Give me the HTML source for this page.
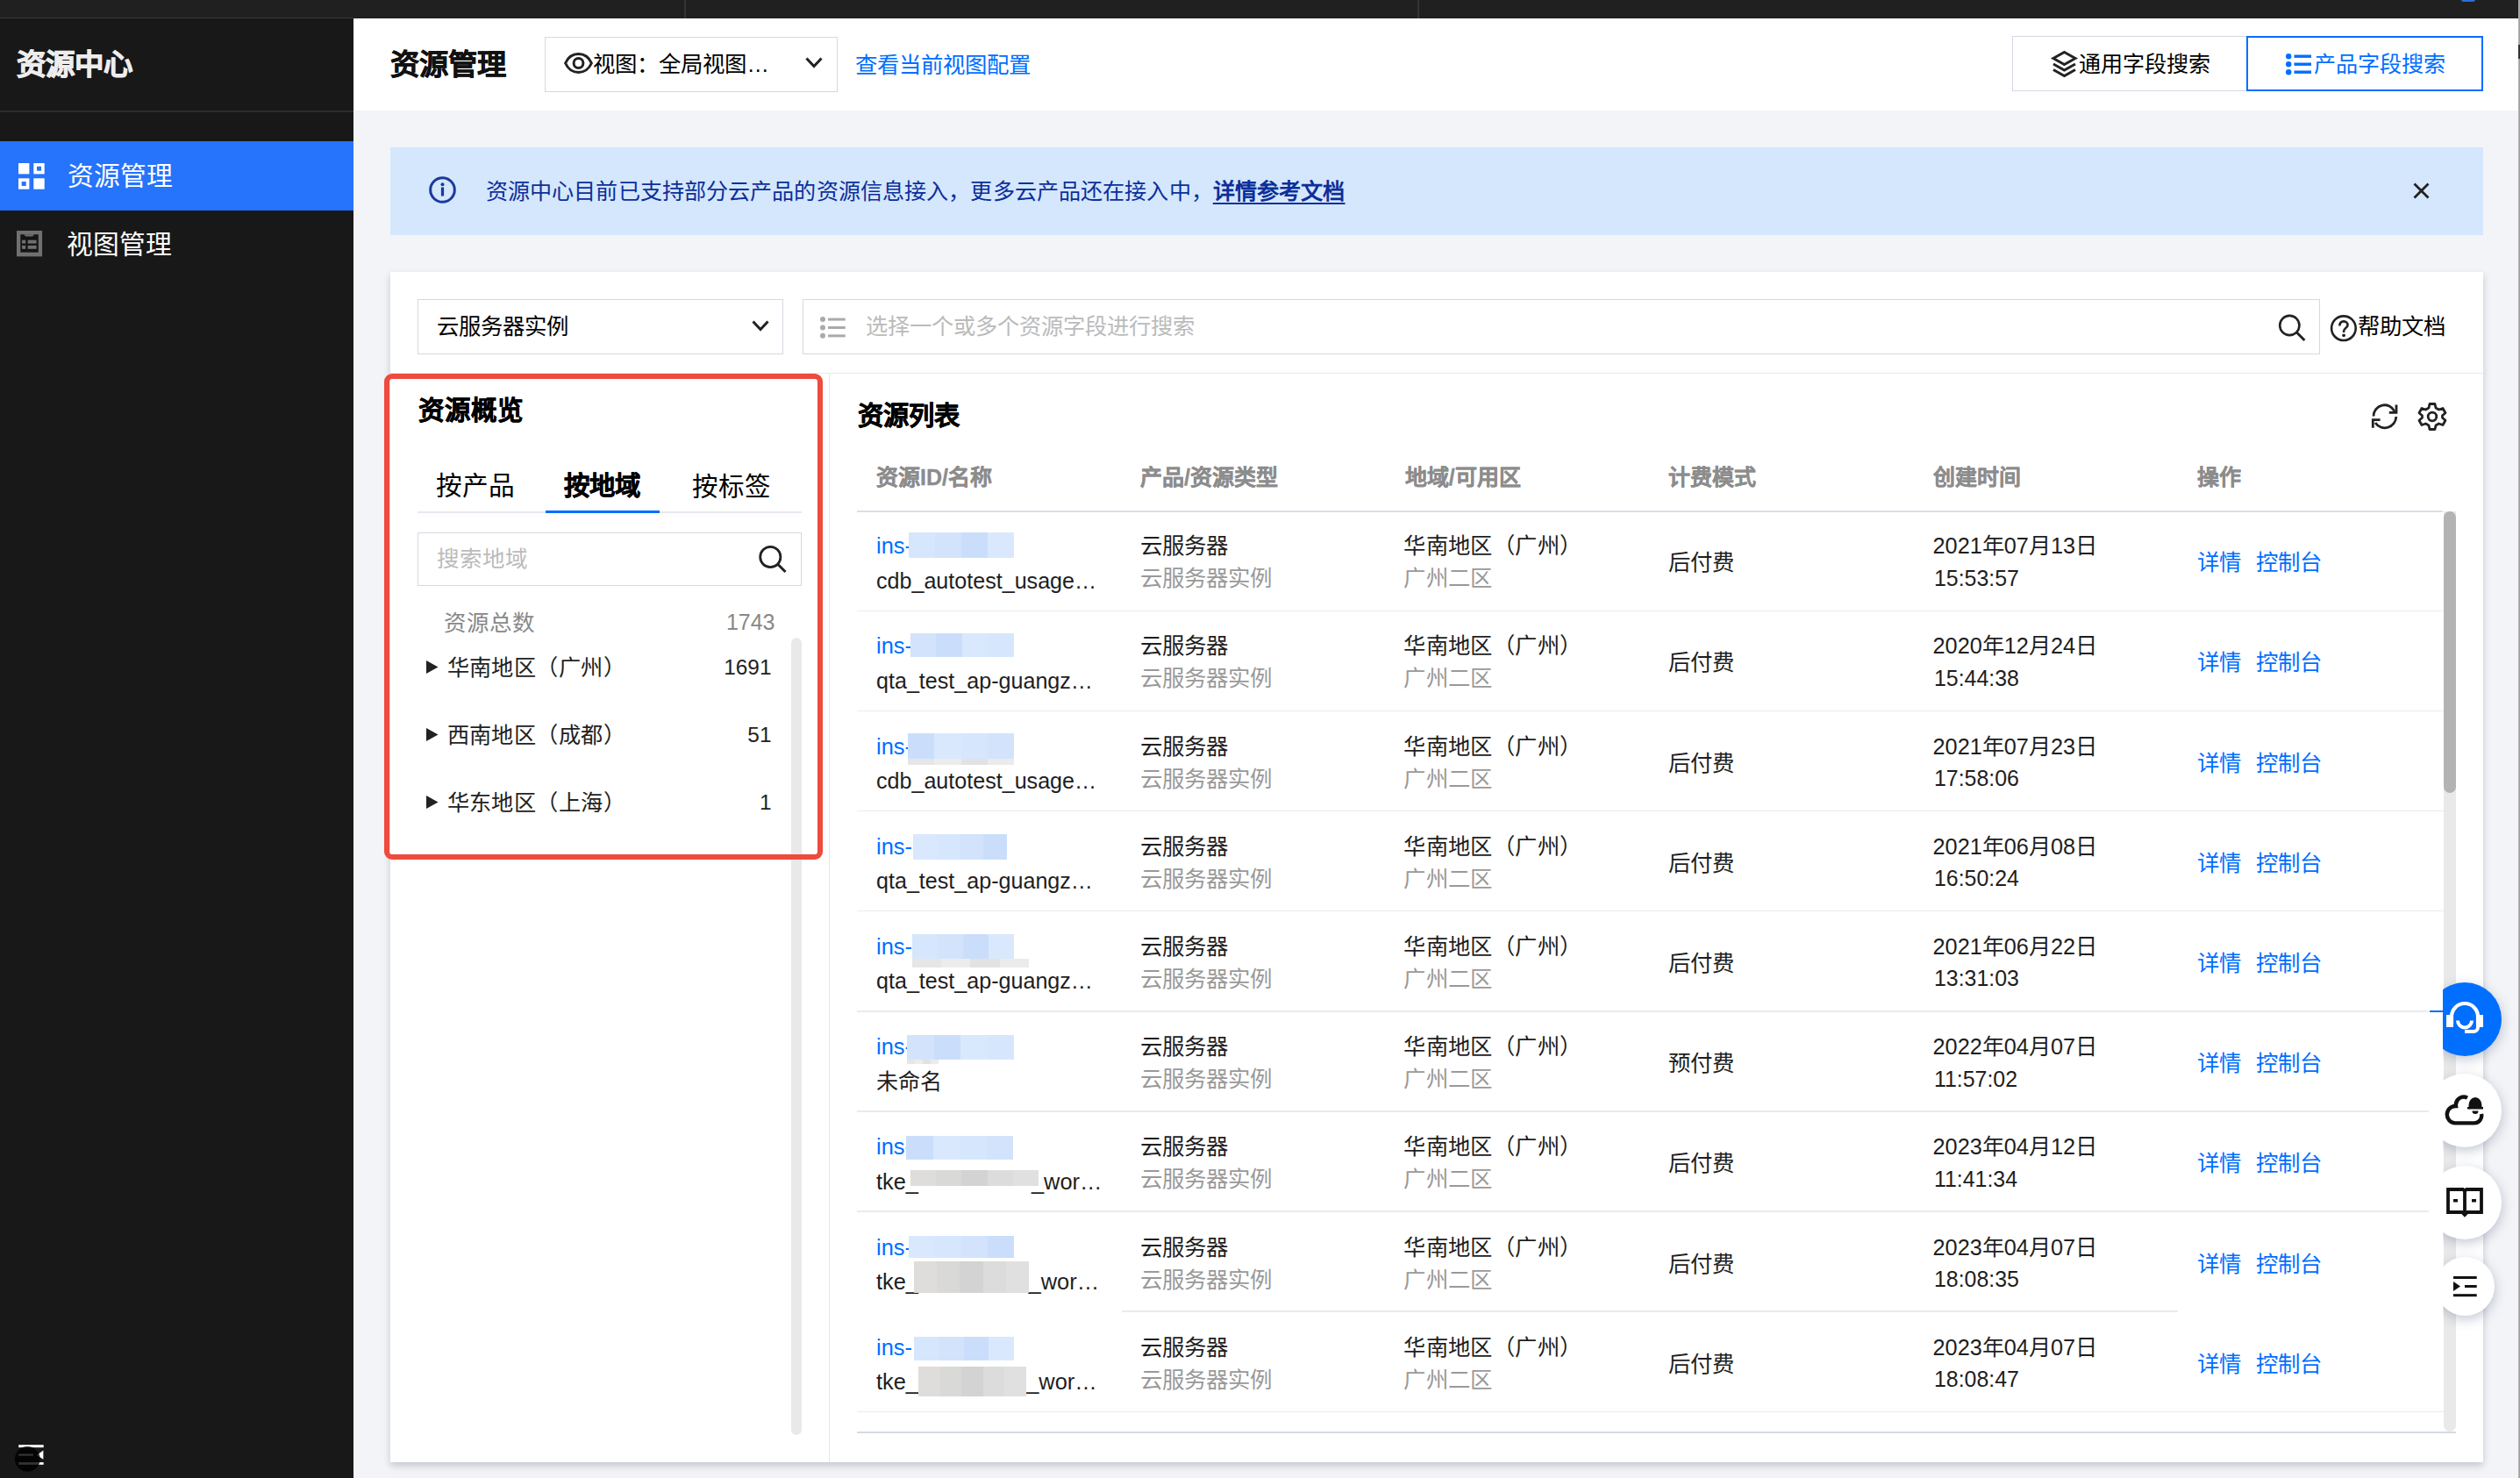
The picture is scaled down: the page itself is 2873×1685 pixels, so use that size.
<!DOCTYPE html>
<html lang="zh-CN"><head><meta charset="utf-8"><style>
*{box-sizing:border-box;margin:0;padding:0}
html,body{width:2873px;height:1685px;overflow:hidden}
body{position:relative;background:#f3f4f7;font-family:"Liberation Sans",sans-serif;color:#000;font-size:25.4px}
.a{position:absolute;white-space:nowrap}
svg{position:absolute;overflow:visible}
</style></head><body>
<div class="a" style="left:0px;top:0px;width:2871px;height:21px;background:#202020"></div>
<div class="a" style="left:780px;top:0px;width:2px;height:21px;background:#333"></div>
<div class="a" style="left:1616px;top:0px;width:2px;height:21px;background:#333"></div>
<div class="a" style="left:2806px;top:-3px;width:16px;height:5px;border-radius:3px;background:#2a6fd8"></div>
<div class="a" style="left:2871px;top:0px;width:2px;height:1685px;background:linear-gradient(90deg,#b8b8b8,#999)"></div>
<div class="a" style="left:2871px;top:51px;width:2px;height:16px;background:#333"></div>
<div class="a" style="left:0px;top:21px;width:403px;height:1664px;background:#181818"></div>
<div class="a" style="left:0px;top:20px;width:403px;height:1px;background:#363636"></div>
<div class="a" style="left:0px;top:126px;width:403px;height:1.5px;background:#2c2c2c"></div>
<div class="a" style="left:18.5px;top:49.00px;line-height:50px;font-size:33.5px;color:#ededed;font-weight:bold;-webkit-text-stroke:0.9px #ededed">资源中心</div>
<div class="a" style="left:0px;top:160.5px;width:403px;height:79px;background:#2673fc"></div>
<svg style="left:20.6px;top:185.5px;" width="30" height="30" viewBox="0 0 30 30"><rect x="0" y="0" width="12.4" height="12.4" fill="#fff"/><rect x="17.3" y="0" width="12.4" height="12.4" fill="#fff"/><rect x="21" y="3.7" width="5" height="5" fill="#2673fc"/><rect x="0" y="17.3" width="12.4" height="12.4" fill="#fff"/><rect x="3.7" y="21" width="5" height="5" fill="#2673fc"/><rect x="17.3" y="17.3" width="12.4" height="12.4" fill="#fff"/></svg>
<div class="a" style="left:76.5px;top:177.80px;line-height:45px;font-size:29.8px;color:#fff;font-weight:normal;">资源管理</div>
<svg style="left:18.8px;top:263.2px;" width="29.1" height="29.4" viewBox="0 0 29.1 29.4"><rect x="0" y="0" width="29.1" height="29.4" fill="#707070"/><rect x="4.3" y="4.3" width="20.5" height="20.4" fill="#151515"/><path d="M8.2 4.2 L10.2 6.4 H18.1 L20.1 4.2 Z" fill="#707070"/><rect x="6.1" y="10.7" width="4.1" height="3.9" fill="#707070"/><rect x="12.7" y="10.7" width="9.9" height="3.9" fill="#707070"/><rect x="6.1" y="16.9" width="4.1" height="3.9" fill="#707070"/><rect x="12.7" y="16.9" width="9.9" height="3.9" fill="#707070"/></svg>
<div class="a" style="left:76px;top:256.00px;line-height:45px;font-size:29.8px;color:#fff;font-weight:normal;">视图管理</div>
<svg style="left:16px;top:1645px;" width="36" height="34" viewBox="0 0 36 34"><rect x="5.2" y="2.2" width="28.5" height="3" fill="#fff"/><rect x="5.2" y="12.5" width="16.7" height="2.2" fill="#fff"/><path d="M25.8 14 L33.4 8.4 V18.8 Z" fill="#fff"/><rect x="5.2" y="22.1" width="28.5" height="2.7" fill="#fff"/><circle cx="15.3" cy="18.4" r="14.4" fill="rgba(0,0,0,.8)"/></svg>
<div class="a" style="left:403px;top:21px;width:2468px;height:105px;background:#fff"></div>
<div class="a" style="left:445px;top:48.80px;line-height:50px;font-size:33.3px;color:#111;font-weight:bold;-webkit-text-stroke:0.5px #111">资源管理</div>
<div class="a" style="left:620.5px;top:41.5px;width:334px;height:63px;border:1.5px solid #d3d9e2;background:#fff"></div>
<svg style="left:643px;top:60px;" width="33" height="24" viewBox="0 0 33 24"><path d="M1.6 12 C5 4.5 10 1.6 16.5 1.6 C23 1.6 28 4.5 31.4 12 C28 19.5 23 22.4 16.5 22.4 C10 22.4 5 19.5 1.6 12 Z" fill="none" stroke="#222" stroke-width="3"/><circle cx="16.5" cy="12" r="5.4" fill="none" stroke="#222" stroke-width="3"/></svg>
<div class="a" style="left:676.4px;top:53.50px;line-height:38px;font-size:25.4px;color:#000;font-weight:normal;">视图：全局视图…</div>
<svg style="left:918px;top:65px;" width="20" height="13" viewBox="0 0 20 13"><path d="M1.5 1.5 L10 10.5 L18.5 1.5" fill="none" stroke="#222" stroke-width="3"/></svg>
<div class="a" style="left:975px;top:54.50px;line-height:38px;font-size:25.4px;color:#006eff;font-weight:normal;">查看当前视图配置</div>
<div class="a" style="left:2294px;top:41.2px;width:268px;height:63px;border:1.5px solid #d3d9e2;background:#fff"></div>
<svg style="left:2338.9px;top:58px;" width="29" height="29" viewBox="0 0 29 29"><path d="M14.5 1.5 L27 8.5 L14.5 15.5 L2 8.5 Z" fill="none" stroke="#222" stroke-width="3"/><path d="M2 15 L14.5 22 L27 15" fill="none" stroke="#222" stroke-width="3"/><path d="M2 21.5 L14.5 28.5 L27 21.5" fill="none" stroke="#222" stroke-width="3"/></svg>
<div class="a" style="left:2370px;top:53.80px;line-height:38px;font-size:25.1px;color:#000;font-weight:normal;">通用字段搜索</div>
<div class="a" style="left:2561px;top:41.2px;width:270px;height:63px;border:2px solid #006eff;background:#fff"></div>
<svg style="left:2606px;top:60.5px;" width="30" height="25" viewBox="0 0 30 25"><circle cx="3.2" cy="3.2" r="3.2" fill="#006eff"/><circle cx="3.2" cy="12.2" r="3.2" fill="#006eff"/><circle cx="3.2" cy="21.2" r="3.2" fill="#006eff"/><rect x="9.5" y="1.5" width="19.5" height="3.4" fill="#006eff"/><rect x="9.5" y="10.5" width="19.5" height="3.4" fill="#006eff"/><rect x="9.5" y="19.5" width="19.5" height="3.4" fill="#006eff"/></svg>
<div class="a" style="left:2637.5px;top:53.80px;line-height:38px;font-size:25.1px;color:#006eff;font-weight:normal;">产品字段搜索</div>
<div class="a" style="left:445px;top:168px;width:2386px;height:100px;background:#d5e7fd"></div>
<svg style="left:489px;top:201px;" width="31" height="31" viewBox="0 0 31 31"><circle cx="15.5" cy="15.5" r="13.8" fill="none" stroke="#1a3a9c" stroke-width="3"/><circle cx="15.5" cy="9.2" r="2" fill="#1a3a9c"/><rect x="13.9" y="12.5" width="3.2" height="10" fill="#1a3a9c"/></svg>
<div class="a" style="left:553.8px;top:199.00px;line-height:38px;font-size:25.1px;color:#0b2f9a;font-weight:normal;letter-spacing:0.12px">资源中心目前已支持部分云产品的资源信息接入，更多云产品还在接入中，<b style="text-decoration:underline;text-underline-offset:4px;text-decoration-thickness:2px">详情参考文档</b></div>
<svg style="left:2750.5px;top:208px;" width="19" height="19" viewBox="0 0 19 19"><path d="M1.5 1.5 L17.5 17.5 M17.5 1.5 L1.5 17.5" stroke="#222" stroke-width="2.8"/></svg>
<div class="a" style="left:445px;top:310px;width:2386px;height:1357px;background:#fff;box-shadow:0 4px 8px rgba(30,40,70,.22)"></div>
<div class="a" style="left:476px;top:341px;width:417px;height:63px;border:1.5px solid #d3d9e2"></div>
<div class="a" style="left:497.5px;top:353.00px;line-height:38px;font-size:25.4px;color:#000;font-weight:normal;">云服务器实例</div>
<svg style="left:857px;top:365px;" width="20" height="13" viewBox="0 0 20 13"><path d="M1.5 1.5 L10 10.5 L18.5 1.5" fill="none" stroke="#222" stroke-width="3"/></svg>
<div class="a" style="left:915px;top:341px;width:1729.5px;height:63px;border:1.5px solid #d3d9e2"></div>
<svg style="left:935.3px;top:360.8px;" width="29" height="25" viewBox="0 0 29 25"><circle cx="3" cy="3" r="3" fill="#aaa"/><circle cx="3" cy="12.4" r="3" fill="#aaa"/><circle cx="3" cy="21.8" r="3" fill="#aaa"/><rect x="9" y="1.6" width="19.7" height="3" fill="#aaa"/><rect x="9" y="11" width="19.7" height="3" fill="#aaa"/><rect x="9" y="20.4" width="19.7" height="3" fill="#aaa"/></svg>
<div class="a" style="left:986.6px;top:353.00px;line-height:38px;font-size:25.28px;color:#bbb;font-weight:normal;">选择一个或多个资源字段进行搜索</div>
<svg style="left:2597px;top:357px;" width="32" height="32" viewBox="0 0 32 32"><circle cx="13.3" cy="14" r="11.1" fill="none" stroke="#222" stroke-width="2.6"/><path d="M21.2 21.8 L30.4 31" stroke="#222" stroke-width="3"/></svg>
<svg style="left:2656px;top:357px;" width="32" height="32" viewBox="0 0 32 32"><circle cx="15.9" cy="17.2" r="13.8" fill="none" stroke="#222" stroke-width="2.6"/><path d="M11.4 14.6 C11.4 11 13.4 9.4 16 9.4 C18.8 9.4 20.6 11.2 20.6 13.6 C20.6 16.4 16.1 17.4 16.1 20.4 V22" fill="none" stroke="#222" stroke-width="2.6"/><circle cx="16.1" cy="25.3" r="1.9" fill="#222"/></svg>
<div class="a" style="left:2688px;top:353.00px;line-height:38px;font-size:25.4px;color:#000;font-weight:normal;">帮助文档</div>
<div class="a" style="left:445px;top:424.5px;width:2386px;height:1.5px;background:#e6e9ef"></div>
<div class="a" style="left:945px;top:425px;width:1.2px;height:1242px;background:#e3e7ee"></div>
<div class="a" style="left:476.5px;top:446.00px;line-height:44px;font-size:29.5px;color:#000;font-weight:bold;-webkit-text-stroke:0.5px #000">资源概览</div>
<div class="a" style="left:497px;top:530.50px;line-height:45px;font-size:29.7px;color:#000;font-weight:normal;">按产品</div>
<div class="a" style="left:643px;top:532.00px;line-height:44px;font-size:29.4px;color:#000;font-weight:bold;-webkit-text-stroke:0.5px #000">按地域</div>
<div class="a" style="left:788.7px;top:532.70px;line-height:44px;font-size:29.5px;color:#000;font-weight:normal;">按标签</div>
<div class="a" style="left:476px;top:583px;width:438px;height:1.5px;background:#e6e9ef"></div>
<div class="a" style="left:622px;top:581.5px;width:130px;height:3.5px;background:#006eff"></div>
<div class="a" style="left:476px;top:606.5px;width:438px;height:61.5px;border:1.5px solid #d3d9e2"></div>
<div class="a" style="left:498px;top:618.00px;line-height:38px;font-size:25.5px;color:#bbb;font-weight:normal;">搜索地域</div>
<svg style="left:865.4px;top:621.3px;" width="32" height="32" viewBox="0 0 32 32"><circle cx="13.3" cy="14" r="11.6" fill="none" stroke="#222" stroke-width="2.8"/><path d="M21.5 22 L30.5 31" stroke="#222" stroke-width="3"/></svg>
<div class="a" style="left:506px;top:690.50px;line-height:38px;font-size:25.5px;color:#888;font-weight:normal;">资源总数</div>
<div class="a" style="right:1989.5px;top:689.50px;line-height:38px;font-size:25.0px;color:#888;font-weight:normal;text-align:right;">1743</div>
<svg style="left:486px;top:753.1px;" width="14" height="15" viewBox="0 0 14 15"><path d="M0 0 L13.5 7.5 L0 15 Z" fill="#222"/></svg>
<div class="a" style="left:509.5px;top:742.10px;line-height:38px;font-size:25.2px;color:#222;font-weight:normal;letter-spacing:0.45px">华南地区（广州）</div>
<div class="a" style="right:1993.5px;top:742.10px;line-height:37px;font-size:24.4px;color:#222;font-weight:normal;text-align:right;">1691</div>
<svg style="left:486px;top:829.5px;" width="14" height="15" viewBox="0 0 14 15"><path d="M0 0 L13.5 7.5 L0 15 Z" fill="#222"/></svg>
<div class="a" style="left:509.5px;top:818.50px;line-height:38px;font-size:25.2px;color:#222;font-weight:normal;letter-spacing:0.45px">西南地区（成都）</div>
<div class="a" style="right:1993.5px;top:818.50px;line-height:37px;font-size:24.4px;color:#222;font-weight:normal;text-align:right;">51</div>
<svg style="left:486px;top:907.1px;" width="14" height="15" viewBox="0 0 14 15"><path d="M0 0 L13.5 7.5 L0 15 Z" fill="#222"/></svg>
<div class="a" style="left:509.5px;top:896.10px;line-height:38px;font-size:25.2px;color:#222;font-weight:normal;letter-spacing:0.45px">华东地区（上海）</div>
<div class="a" style="right:1993.5px;top:896.10px;line-height:37px;font-size:24.4px;color:#222;font-weight:normal;text-align:right;">1</div>
<div class="a" style="left:902px;top:727px;width:12px;height:909px;background:#e9e9e9;border-radius:6px"></div>
<div class="a" style="left:438px;top:426px;width:500px;height:553.5px;border:6.4px solid #ee4a3d;border-radius:9px"></div>
<div class="a" style="left:978px;top:452.00px;line-height:44px;font-size:29.3px;color:#000;font-weight:bold;-webkit-text-stroke:0.5px #000">资源列表</div>
<svg style="left:2703px;top:459px;" width="32" height="32" viewBox="0 0 32 32"><path d="M3 15.5 A12.6 12.6 0 0 1 27 10" fill="none" stroke="#222" stroke-width="2.8"/><path d="M28.8 16 A13 13 0 0 1 5 23" fill="none" stroke="#222" stroke-width="2.8"/><path d="M29 2.5 V11.3 H20.8" fill="none" stroke="#222" stroke-width="2.8"/><path d="M2.3 28.8 V19.6 H10.6" fill="none" stroke="#222" stroke-width="2.8"/></svg>
<svg style="left:2757.3px;top:459.4px;" width="30.2" height="30.2" viewBox="0 0 30.2 30.2"><path d="M13 1.5 H19 L20 6 L23.5 8 L28 6.5 L31 11.8 L27.5 14.8 V17.2 L31 20.2 L28 25.5 L23.5 24 L20 26 L19 30.5 H13 L12 26 L8.5 24 L4 25.5 L1 20.2 L4.5 17.2 V14.8 L1 11.8 L4 6.5 L8.5 8 L12 6 Z" fill="none" stroke="#222" stroke-width="2.8" stroke-linejoin="round"/><circle cx="16" cy="16" r="4.8" fill="none" stroke="#222" stroke-width="2.8"/></svg>
<div class="a" style="left:999px;top:524.60px;line-height:38px;font-size:25px;color:#8c8c8c;font-weight:bold;-webkit-text-stroke:0.3px #8c8c8c">资源ID/名称</div>
<div class="a" style="left:1300px;top:524.60px;line-height:38px;font-size:25px;color:#8c8c8c;font-weight:bold;-webkit-text-stroke:0.3px #8c8c8c">产品/资源类型</div>
<div class="a" style="left:1601.7px;top:524.60px;line-height:38px;font-size:25px;color:#8c8c8c;font-weight:bold;-webkit-text-stroke:0.3px #8c8c8c">地域/可用区</div>
<div class="a" style="left:1902px;top:524.60px;line-height:38px;font-size:25px;color:#8c8c8c;font-weight:bold;-webkit-text-stroke:0.3px #8c8c8c">计费模式</div>
<div class="a" style="left:2204px;top:524.60px;line-height:38px;font-size:25px;color:#8c8c8c;font-weight:bold;-webkit-text-stroke:0.3px #8c8c8c">创建时间</div>
<div class="a" style="left:2505px;top:524.60px;line-height:38px;font-size:25px;color:#8c8c8c;font-weight:bold;-webkit-text-stroke:0.3px #8c8c8c">操作</div>
<div class="a" style="left:977px;top:582px;width:1808px;height:1.5px;background:#d9dee8"></div>
<div class="a" style="left:999px;top:603.20px;line-height:38px;font-size:25.4px;color:#006eff;font-weight:normal;">ins-</div>
<div class="a" style="left:1035.8px;top:607.3px;width:120.20000000000005px;height:28.3px;background:linear-gradient(90deg,#d6e6fd 0.0% 25.0%,#d3e3fc 25.0% 50.0%,#cadefb 50.0% 75.0%,#d9e8fd 75.0% 100.0%)"></div>
<div class="a" style="left:999px;top:642.50px;line-height:38px;font-size:25.1px;color:#1e1e1e;font-weight:normal;">cdb_autotest_usage…</div>
<div class="a" style="left:1300px;top:603.20px;line-height:38px;font-size:25.4px;color:#1e1e1e;font-weight:normal;">云服务器</div>
<div class="a" style="left:1300px;top:640.10px;line-height:38px;font-size:25.4px;color:#999;font-weight:normal;">云服务器实例</div>
<div class="a" style="left:1600.2px;top:603.20px;line-height:38px;font-size:25.3px;color:#1e1e1e;font-weight:normal;letter-spacing:0.4px">华南地区（广州）</div>
<div class="a" style="left:1600.2px;top:640.10px;line-height:38px;font-size:25.4px;color:#999;font-weight:normal;letter-spacing:0.4px">广州二区</div>
<div class="a" style="left:1902px;top:622.10px;line-height:38px;font-size:25.4px;color:#1e1e1e;font-weight:normal;">后付费</div>
<div class="a" style="left:2203.5px;top:603.20px;line-height:38px;font-size:25.3px;color:#1e1e1e;font-weight:normal;">2021年07月13日</div>
<div class="a" style="left:2205px;top:640.60px;line-height:37px;font-size:24.9px;color:#1e1e1e;font-weight:normal;">15:53:57</div>
<div class="a" style="left:2505px;top:622.10px;line-height:38px;font-size:25.4px;color:#006eff;font-weight:normal;">详情</div>
<div class="a" style="left:2572px;top:622.10px;line-height:38px;font-size:25.4px;color:#006eff;font-weight:normal;">控制台</div>
<div class="a" style="left:977px;top:695.9699999999999px;width:1808.5px;height:1.3px;background:#e8ebf0"></div>
<div class="a" style="left:999px;top:717.40px;line-height:38px;font-size:25.4px;color:#006eff;font-weight:normal;">ins-</div>
<div class="a" style="left:1037.8px;top:721.9699999999999px;width:118.20000000000005px;height:26.6px;background:linear-gradient(90deg,#d3e3fc 0.0% 25.0%,#cadefb 25.0% 50.0%,#d9e8fd 50.0% 75.0%,#d6e6fd 75.0% 100.0%)"></div>
<div class="a" style="left:999px;top:756.70px;line-height:38px;font-size:25.1px;color:#1e1e1e;font-weight:normal;">qta_test_ap-guangz…</div>
<div class="a" style="left:1300px;top:717.40px;line-height:38px;font-size:25.4px;color:#1e1e1e;font-weight:normal;">云服务器</div>
<div class="a" style="left:1300px;top:754.30px;line-height:38px;font-size:25.4px;color:#999;font-weight:normal;">云服务器实例</div>
<div class="a" style="left:1600.2px;top:717.40px;line-height:38px;font-size:25.3px;color:#1e1e1e;font-weight:normal;letter-spacing:0.4px">华南地区（广州）</div>
<div class="a" style="left:1600.2px;top:754.30px;line-height:38px;font-size:25.4px;color:#999;font-weight:normal;letter-spacing:0.4px">广州二区</div>
<div class="a" style="left:1902px;top:736.30px;line-height:38px;font-size:25.4px;color:#1e1e1e;font-weight:normal;">后付费</div>
<div class="a" style="left:2203.5px;top:717.40px;line-height:38px;font-size:25.3px;color:#1e1e1e;font-weight:normal;">2020年12月24日</div>
<div class="a" style="left:2205px;top:754.80px;line-height:37px;font-size:24.9px;color:#1e1e1e;font-weight:normal;">15:44:38</div>
<div class="a" style="left:2505px;top:736.30px;line-height:38px;font-size:25.4px;color:#006eff;font-weight:normal;">详情</div>
<div class="a" style="left:2572px;top:736.30px;line-height:38px;font-size:25.4px;color:#006eff;font-weight:normal;">控制台</div>
<div class="a" style="left:977px;top:810.0399999999998px;width:1808.5px;height:1.3px;background:#e8ebf0"></div>
<div class="a" style="left:999px;top:831.60px;line-height:38px;font-size:25.4px;color:#006eff;font-weight:normal;">ins-</div>
<div class="a" style="left:1034.5px;top:865.04px;width:121.09999999999991px;height:7.0px;background:linear-gradient(90deg,#e6e6e6 0.0% 25.0%,#ececec 25.0% 50.0%,#e2e2e2 50.0% 75.0%,#ebebeb 75.0% 100.0%)"></div>
<div class="a" style="left:1034.5px;top:836.24px;width:121.09999999999991px;height:28.799999999999997px;background:linear-gradient(90deg,#cadefb 0.0% 25.0%,#d9e8fd 25.0% 50.0%,#d6e6fd 50.0% 75.0%,#d3e3fc 75.0% 100.0%)"></div>
<div class="a" style="left:999px;top:870.90px;line-height:38px;font-size:25.1px;color:#1e1e1e;font-weight:normal;">cdb_autotest_usage…</div>
<div class="a" style="left:1300px;top:831.60px;line-height:38px;font-size:25.4px;color:#1e1e1e;font-weight:normal;">云服务器</div>
<div class="a" style="left:1300px;top:868.50px;line-height:38px;font-size:25.4px;color:#999;font-weight:normal;">云服务器实例</div>
<div class="a" style="left:1600.2px;top:831.60px;line-height:38px;font-size:25.3px;color:#1e1e1e;font-weight:normal;letter-spacing:0.4px">华南地区（广州）</div>
<div class="a" style="left:1600.2px;top:868.50px;line-height:38px;font-size:25.4px;color:#999;font-weight:normal;letter-spacing:0.4px">广州二区</div>
<div class="a" style="left:1902px;top:850.50px;line-height:38px;font-size:25.4px;color:#1e1e1e;font-weight:normal;">后付费</div>
<div class="a" style="left:2203.5px;top:831.60px;line-height:38px;font-size:25.3px;color:#1e1e1e;font-weight:normal;">2021年07月23日</div>
<div class="a" style="left:2205px;top:869.00px;line-height:37px;font-size:24.9px;color:#1e1e1e;font-weight:normal;">17:58:06</div>
<div class="a" style="left:2505px;top:850.50px;line-height:38px;font-size:25.4px;color:#006eff;font-weight:normal;">详情</div>
<div class="a" style="left:2572px;top:850.50px;line-height:38px;font-size:25.4px;color:#006eff;font-weight:normal;">控制台</div>
<div class="a" style="left:977px;top:924.11px;width:1808.5px;height:1.3px;background:#e8ebf0"></div>
<div class="a" style="left:999px;top:945.80px;line-height:38px;font-size:25.4px;color:#006eff;font-weight:normal;">ins-</div>
<div class="a" style="left:1041px;top:950.51px;width:106.59999999999991px;height:29.7px;background:linear-gradient(90deg,#d9e8fd 0.0% 25.0%,#d6e6fd 25.0% 50.0%,#d3e3fc 50.0% 75.0%,#cadefb 75.0% 100.0%)"></div>
<div class="a" style="left:999px;top:985.10px;line-height:38px;font-size:25.1px;color:#1e1e1e;font-weight:normal;">qta_test_ap-guangz…</div>
<div class="a" style="left:1300px;top:945.80px;line-height:38px;font-size:25.4px;color:#1e1e1e;font-weight:normal;">云服务器</div>
<div class="a" style="left:1300px;top:982.70px;line-height:38px;font-size:25.4px;color:#999;font-weight:normal;">云服务器实例</div>
<div class="a" style="left:1600.2px;top:945.80px;line-height:38px;font-size:25.3px;color:#1e1e1e;font-weight:normal;letter-spacing:0.4px">华南地区（广州）</div>
<div class="a" style="left:1600.2px;top:982.70px;line-height:38px;font-size:25.4px;color:#999;font-weight:normal;letter-spacing:0.4px">广州二区</div>
<div class="a" style="left:1902px;top:964.70px;line-height:38px;font-size:25.4px;color:#1e1e1e;font-weight:normal;">后付费</div>
<div class="a" style="left:2203.5px;top:945.80px;line-height:38px;font-size:25.3px;color:#1e1e1e;font-weight:normal;">2021年06月08日</div>
<div class="a" style="left:2205px;top:983.20px;line-height:37px;font-size:24.9px;color:#1e1e1e;font-weight:normal;">16:50:24</div>
<div class="a" style="left:2505px;top:964.70px;line-height:38px;font-size:25.4px;color:#006eff;font-weight:normal;">详情</div>
<div class="a" style="left:2572px;top:964.70px;line-height:38px;font-size:25.4px;color:#006eff;font-weight:normal;">控制台</div>
<div class="a" style="left:977px;top:1038.18px;width:1808.5px;height:1.3px;background:#e8ebf0"></div>
<div class="a" style="left:999px;top:1060.00px;line-height:38px;font-size:25.4px;color:#006eff;font-weight:normal;">ins-</div>
<div class="a" style="left:1040.4px;top:1093.28px;width:132.5px;height:9.5px;background:linear-gradient(90deg,#e6e6e6 0.0% 25.0%,#ececec 25.0% 50.0%,#e2e2e2 50.0% 75.0%,#ebebeb 75.0% 100.0%)"></div>
<div class="a" style="left:1040.4px;top:1065.3799999999999px;width:115.19999999999982px;height:27.9px;background:linear-gradient(90deg,#d6e6fd 0.0% 25.0%,#d3e3fc 25.0% 50.0%,#cadefb 50.0% 75.0%,#d9e8fd 75.0% 100.0%)"></div>
<div class="a" style="left:999px;top:1099.30px;line-height:38px;font-size:25.1px;color:#1e1e1e;font-weight:normal;">qta_test_ap-guangz…</div>
<div class="a" style="left:1300px;top:1060.00px;line-height:38px;font-size:25.4px;color:#1e1e1e;font-weight:normal;">云服务器</div>
<div class="a" style="left:1300px;top:1096.90px;line-height:38px;font-size:25.4px;color:#999;font-weight:normal;">云服务器实例</div>
<div class="a" style="left:1600.2px;top:1060.00px;line-height:38px;font-size:25.3px;color:#1e1e1e;font-weight:normal;letter-spacing:0.4px">华南地区（广州）</div>
<div class="a" style="left:1600.2px;top:1096.90px;line-height:38px;font-size:25.4px;color:#999;font-weight:normal;letter-spacing:0.4px">广州二区</div>
<div class="a" style="left:1902px;top:1078.90px;line-height:38px;font-size:25.4px;color:#1e1e1e;font-weight:normal;">后付费</div>
<div class="a" style="left:2203.5px;top:1060.00px;line-height:38px;font-size:25.3px;color:#1e1e1e;font-weight:normal;">2021年06月22日</div>
<div class="a" style="left:2205px;top:1097.40px;line-height:37px;font-size:24.9px;color:#1e1e1e;font-weight:normal;">13:31:03</div>
<div class="a" style="left:2505px;top:1078.90px;line-height:38px;font-size:25.4px;color:#006eff;font-weight:normal;">详情</div>
<div class="a" style="left:2572px;top:1078.90px;line-height:38px;font-size:25.4px;color:#006eff;font-weight:normal;">控制台</div>
<div class="a" style="left:977px;top:1152.25px;width:1808.5px;height:1.3px;background:#e8ebf0"></div>
<div class="a" style="left:999px;top:1174.20px;line-height:38px;font-size:25.4px;color:#006eff;font-weight:normal;">ins-</div>
<div class="a" style="left:1033.6px;top:1207.85px;width:36.30000000000018px;height:5.0px;background:linear-gradient(90deg,#e6e6e6 0.0% 25.0%,#ececec 25.0% 50.0%,#e2e2e2 50.0% 75.0%,#ebebeb 75.0% 100.0%)"></div>
<div class="a" style="left:1033.6px;top:1180.05px;width:122.0px;height:27.8px;background:linear-gradient(90deg,#d3e3fc 0.0% 25.0%,#cadefb 25.0% 50.0%,#d9e8fd 50.0% 75.0%,#d6e6fd 75.0% 100.0%)"></div>
<div class="a" style="left:999px;top:1213.50px;line-height:38px;font-size:25.1px;color:#1e1e1e;font-weight:normal;">未命名</div>
<div class="a" style="left:1300px;top:1174.20px;line-height:38px;font-size:25.4px;color:#1e1e1e;font-weight:normal;">云服务器</div>
<div class="a" style="left:1300px;top:1211.10px;line-height:38px;font-size:25.4px;color:#999;font-weight:normal;">云服务器实例</div>
<div class="a" style="left:1600.2px;top:1174.20px;line-height:38px;font-size:25.3px;color:#1e1e1e;font-weight:normal;letter-spacing:0.4px">华南地区（广州）</div>
<div class="a" style="left:1600.2px;top:1211.10px;line-height:38px;font-size:25.4px;color:#999;font-weight:normal;letter-spacing:0.4px">广州二区</div>
<div class="a" style="left:1902px;top:1193.10px;line-height:38px;font-size:25.4px;color:#1e1e1e;font-weight:normal;">预付费</div>
<div class="a" style="left:2203.5px;top:1174.20px;line-height:38px;font-size:25.3px;color:#1e1e1e;font-weight:normal;">2022年04月07日</div>
<div class="a" style="left:2205px;top:1211.60px;line-height:37px;font-size:24.9px;color:#1e1e1e;font-weight:normal;">11:57:02</div>
<div class="a" style="left:2505px;top:1193.10px;line-height:38px;font-size:25.4px;color:#006eff;font-weight:normal;">详情</div>
<div class="a" style="left:2572px;top:1193.10px;line-height:38px;font-size:25.4px;color:#006eff;font-weight:normal;">控制台</div>
<div class="a" style="left:977px;top:1266.32px;width:1808.5px;height:1.3px;background:#e8ebf0"></div>
<div class="a" style="left:999px;top:1288.40px;line-height:38px;font-size:25.4px;color:#006eff;font-weight:normal;">ins-</div>
<div class="a" style="left:1033.1px;top:1295.02px;width:121.90000000000009px;height:26.9px;background:linear-gradient(90deg,#cadefb 0.0% 25.0%,#d9e8fd 25.0% 50.0%,#d6e6fd 50.0% 75.0%,#d3e3fc 75.0% 100.0%)"></div>
<div class="a" style="left:999px;top:1327.70px;line-height:38px;font-size:25.4px;color:#1e1e1e;font-weight:normal;">tke_</div>
<div class="a" style="left:1176px;top:1327.70px;line-height:38px;font-size:25.4px;color:#1e1e1e;font-weight:normal;">_wor…</div>
<div class="a" style="left:1038px;top:1334.1200000000001px;width:146px;height:17.599999999999994px;background:linear-gradient(90deg,#dedddc 0.0% 20.0%,#d9d9d8 20.0% 40.0%,#d3d3d3 40.0% 60.0%,#dcdcdc 60.0% 80.0%,#e0e0e0 80.0% 100.0%)"></div>
<div class="a" style="left:1300px;top:1288.40px;line-height:38px;font-size:25.4px;color:#1e1e1e;font-weight:normal;">云服务器</div>
<div class="a" style="left:1300px;top:1325.30px;line-height:38px;font-size:25.4px;color:#999;font-weight:normal;">云服务器实例</div>
<div class="a" style="left:1600.2px;top:1288.40px;line-height:38px;font-size:25.3px;color:#1e1e1e;font-weight:normal;letter-spacing:0.4px">华南地区（广州）</div>
<div class="a" style="left:1600.2px;top:1325.30px;line-height:38px;font-size:25.4px;color:#999;font-weight:normal;letter-spacing:0.4px">广州二区</div>
<div class="a" style="left:1902px;top:1307.30px;line-height:38px;font-size:25.4px;color:#1e1e1e;font-weight:normal;">后付费</div>
<div class="a" style="left:2203.5px;top:1288.40px;line-height:38px;font-size:25.3px;color:#1e1e1e;font-weight:normal;">2023年04月12日</div>
<div class="a" style="left:2205px;top:1325.80px;line-height:37px;font-size:24.9px;color:#1e1e1e;font-weight:normal;">11:41:34</div>
<div class="a" style="left:2505px;top:1307.30px;line-height:38px;font-size:25.4px;color:#006eff;font-weight:normal;">详情</div>
<div class="a" style="left:2572px;top:1307.30px;line-height:38px;font-size:25.4px;color:#006eff;font-weight:normal;">控制台</div>
<div class="a" style="left:977px;top:1380.39px;width:1808.5px;height:1.3px;background:#e8ebf0"></div>
<div class="a" style="left:999px;top:1402.60px;line-height:38px;font-size:25.4px;color:#006eff;font-weight:normal;">ins-</div>
<div class="a" style="left:1035.7px;top:1408.99px;width:120.70000000000005px;height:25.0px;background:linear-gradient(90deg,#d9e8fd 0.0% 25.0%,#d6e6fd 25.0% 50.0%,#d3e3fc 50.0% 75.0%,#cadefb 75.0% 100.0%)"></div>
<div class="a" style="left:999px;top:1441.90px;line-height:38px;font-size:25.4px;color:#1e1e1e;font-weight:normal;">tke_</div>
<div class="a" style="left:1172.6px;top:1441.90px;line-height:38px;font-size:25.4px;color:#1e1e1e;font-weight:normal;">_wor…</div>
<div class="a" style="left:1041.6px;top:1438.39px;width:131.0px;height:35.300000000000004px;background:linear-gradient(90deg,#dedddc 0.0% 20.0%,#d9d9d8 20.0% 40.0%,#d3d3d3 40.0% 60.0%,#dcdcdc 60.0% 80.0%,#e0e0e0 80.0% 100.0%)"></div>
<div class="a" style="left:1300px;top:1402.60px;line-height:38px;font-size:25.4px;color:#1e1e1e;font-weight:normal;">云服务器</div>
<div class="a" style="left:1300px;top:1439.50px;line-height:38px;font-size:25.4px;color:#999;font-weight:normal;">云服务器实例</div>
<div class="a" style="left:1600.2px;top:1402.60px;line-height:38px;font-size:25.3px;color:#1e1e1e;font-weight:normal;letter-spacing:0.4px">华南地区（广州）</div>
<div class="a" style="left:1600.2px;top:1439.50px;line-height:38px;font-size:25.4px;color:#999;font-weight:normal;letter-spacing:0.4px">广州二区</div>
<div class="a" style="left:1902px;top:1421.50px;line-height:38px;font-size:25.4px;color:#1e1e1e;font-weight:normal;">后付费</div>
<div class="a" style="left:2203.5px;top:1402.60px;line-height:38px;font-size:25.3px;color:#1e1e1e;font-weight:normal;">2023年04月07日</div>
<div class="a" style="left:2205px;top:1440.00px;line-height:37px;font-size:24.9px;color:#1e1e1e;font-weight:normal;">18:08:35</div>
<div class="a" style="left:2505px;top:1421.50px;line-height:38px;font-size:25.4px;color:#006eff;font-weight:normal;">详情</div>
<div class="a" style="left:2572px;top:1421.50px;line-height:38px;font-size:25.4px;color:#006eff;font-weight:normal;">控制台</div>
<div class="a" style="left:1278.5px;top:1494.46px;width:1204.5px;height:1.3px;background:#e8ebf0"></div>
<div class="a" style="left:999px;top:1516.80px;line-height:38px;font-size:25.4px;color:#006eff;font-weight:normal;">ins-</div>
<div class="a" style="left:1042.4px;top:1523.86px;width:114.0px;height:27.099999999999998px;background:linear-gradient(90deg,#d6e6fd 0.0% 25.0%,#d3e3fc 25.0% 50.0%,#cadefb 50.0% 75.0%,#d9e8fd 75.0% 100.0%)"></div>
<div class="a" style="left:999px;top:1556.10px;line-height:38px;font-size:25.4px;color:#1e1e1e;font-weight:normal;">tke_</div>
<div class="a" style="left:1170.2px;top:1556.10px;line-height:38px;font-size:25.4px;color:#1e1e1e;font-weight:normal;">_wor…</div>
<div class="a" style="left:1047.4px;top:1557.6599999999999px;width:122.79999999999995px;height:33.9px;background:linear-gradient(90deg,#dedddc 0.0% 20.0%,#d9d9d8 20.0% 40.0%,#d3d3d3 40.0% 60.0%,#dcdcdc 60.0% 80.0%,#e0e0e0 80.0% 100.0%)"></div>
<div class="a" style="left:1300px;top:1516.80px;line-height:38px;font-size:25.4px;color:#1e1e1e;font-weight:normal;">云服务器</div>
<div class="a" style="left:1300px;top:1553.70px;line-height:38px;font-size:25.4px;color:#999;font-weight:normal;">云服务器实例</div>
<div class="a" style="left:1600.2px;top:1516.80px;line-height:38px;font-size:25.3px;color:#1e1e1e;font-weight:normal;letter-spacing:0.4px">华南地区（广州）</div>
<div class="a" style="left:1600.2px;top:1553.70px;line-height:38px;font-size:25.4px;color:#999;font-weight:normal;letter-spacing:0.4px">广州二区</div>
<div class="a" style="left:1902px;top:1535.70px;line-height:38px;font-size:25.4px;color:#1e1e1e;font-weight:normal;">后付费</div>
<div class="a" style="left:2203.5px;top:1516.80px;line-height:38px;font-size:25.3px;color:#1e1e1e;font-weight:normal;">2023年04月07日</div>
<div class="a" style="left:2205px;top:1554.20px;line-height:37px;font-size:24.9px;color:#1e1e1e;font-weight:normal;">18:08:47</div>
<div class="a" style="left:2505px;top:1535.70px;line-height:38px;font-size:25.4px;color:#006eff;font-weight:normal;">详情</div>
<div class="a" style="left:2572px;top:1535.70px;line-height:38px;font-size:25.4px;color:#006eff;font-weight:normal;">控制台</div>
<div class="a" style="left:977px;top:1608.53px;width:1808.5px;height:1.3px;background:#e8ebf0"></div>
<div class="a" style="left:977px;top:1632.3px;width:1823px;height:1.6px;background:#d5dae3"></div>
<div class="a" style="left:2785.7px;top:583.3px;width:14.2px;height:1048.5px;background:#e9e9e9;border-radius:0 0 7px 7px"></div>
<div class="a" style="left:2785.7px;top:583.3px;width:14.2px;height:320.7px;background:#b3b3b3;border-radius:7px"></div>
<div class="a" style="left:2769.4px;top:1115px;width:16px;height:390px;background:#fff"></div>
<div class="a" style="left:2785.3px;top:1080px;width:86px;height:470px;overflow:hidden">
<div class="a" style="left:-17.30px;top:40.00px;width:84px;height:84px;border-radius:50%;background:#006eff;box-shadow:0 4px 14px rgba(40,55,100,.28)"></div>
<div class="a" style="left:-17.30px;top:144.00px;width:84px;height:84px;border-radius:50%;background:#fff;box-shadow:0 4px 14px rgba(40,55,100,.28)"></div>
<div class="a" style="left:-17.30px;top:249.00px;width:84px;height:84px;border-radius:50%;background:#fff;box-shadow:0 4px 14px rgba(40,55,100,.28)"></div>
<div class="a" style="left:-8.30px;top:352.90px;width:67.0px;height:67.0px;border-radius:50%;background:#fff;box-shadow:0 4px 14px rgba(40,55,100,.28)"></div>
</div>
<svg style="left:2789px;top:1141px" width="42" height="42" viewBox="0 0 42 42"><path d="M6 26 V18 A15 15 0 0 1 36 18 V26" fill="none" stroke="#fff" stroke-width="4.2"/><rect x="0" y="16" width="8" height="14" fill="#fff"/><rect x="34" y="16" width="8" height="14" fill="#fff"/><path d="M13 22.5 A8 8 0 0 0 29 22.5" fill="none" stroke="#fff" stroke-width="4"/><path d="M36 26 V30 A5 5 0 0 1 31 35 H21" fill="none" stroke="#fff" stroke-width="4"/></svg>
<div class="a" style="left:2770px;top:1152.3px;width:15.5px;height:1.6px;background:#006eff"></div>
<svg style="left:2789px;top:1249px" width="42" height="35" viewBox="0 0 42 35"><path d="M24 2.6 A9 9 0 0 0 11 12 A8 8 0 0 0 10 31.4 H32 A8.5 8.5 0 0 0 40 21" fill="none" stroke="#111" stroke-width="4.4"/><path d="M25.5 13 C25.5 7.5 27 3 33 2 C39 3 40.5 7.5 40.5 13 H42 V15.5 H24 V13 Z" fill="#111"/><path d="M29.5 17.5 H36.5 A3.5 3.5 0 0 1 29.5 17.5 Z" fill="#111"/></svg>
<svg style="left:2789px;top:1354px" width="42" height="34" viewBox="0 0 42 34"><path d="M2 2 H19 L21 4 L23 2 H40 V28 H24 L21 31 L18 28 H2 Z" fill="none" stroke="#111" stroke-width="3.8"/><rect x="19.1" y="3" width="3.8" height="25" fill="#111"/><rect x="8" y="13" width="5" height="3.5" fill="#111"/><rect x="29" y="13" width="5" height="3.5" fill="#111"/></svg>
<svg style="left:2797px;top:1455px" width="27" height="24" viewBox="0 0 27 24"><rect x="0" y="0" width="26.7" height="3" fill="#111"/><rect x="13" y="10" width="13.7" height="3" fill="#111"/><rect x="0" y="20.2" width="26.7" height="3" fill="#111"/><path d="M0 6 L8 11.5 L0 17 Z" fill="#111"/></svg>
</body></html>
